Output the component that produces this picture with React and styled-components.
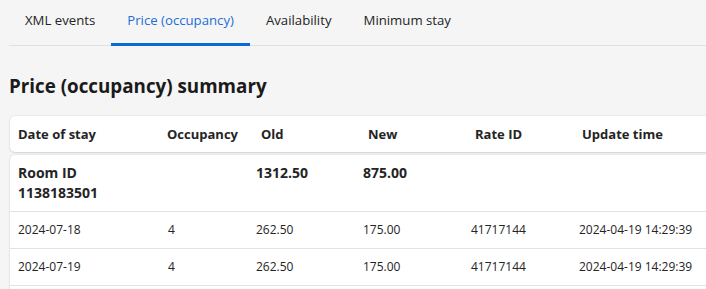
import React from "react";
import styled, { createGlobalStyle } from "styled-components";

const Global = createGlobalStyle`
  html, body { margin: 0; padding: 0; background: #f5f5f5; }
  body { font-family: "Open Sans", "Noto Sans", sans-serif; color: #242424; overflow: hidden; }
  * { box-sizing: border-box; }
`;

const Page = styled.div`
  width: 706px;
  height: 289px;
  padding-left: 9px;
  overflow: hidden;
`;

const TabList = styled.div`
  display: flex;
  height: 46px;
  border-bottom: 1px solid #e0e0e0;
`;

const Tab = styled.div`
  display: flex;
  align-items: center;
  height: 46px;
  margin-bottom: -1px;
  padding: 0 16px 4px;
  font-size: 13.2px;
  color: ${(p) => (p.$active ? "#1b6fd6" : "#242424")};
  border-bottom: 3px solid ${(p) => (p.$active ? "#0b68d8" : "transparent")};
  white-space: nowrap;
`;

const Heading = styled.h2`
  margin: 26px 0 16px;
  font-size: 18.8px;
  line-height: 28px;
  font-weight: 700;
  color: #1a1a1a;
`;

const Card = styled.div`
  margin-left: 1px;
  width: 780px;
  background: #fff;
  border-radius: 5px;
  box-shadow: 0 0 2px rgba(0, 0, 0, 0.12), 0 1px 2px rgba(0, 0, 0, 0.1);
`;

const HeaderCard = styled(Card)`
  margin-bottom: 3px;
`;

const BodyCard = styled(Card)`
  padding-bottom: 40px;
`;

const headCols = "149px 94px 107px 107px 107px 1fr";
const bodyCols = "150px 88px 107px 108px 108px 1fr";

const HeadRow = styled.div`
  display: grid;
  grid-template-columns: ${headCols};
  height: 36px;
  align-items: center;
`;

const HeadCell = styled.div`
  padding-left: 8px;
  font-size: 13px;
  font-weight: 700;
  white-space: nowrap;
`;

const Row = styled.div`
  display: grid;
  grid-template-columns: ${bodyCols};
  align-items: ${(p) => (p.$group ? "start" : "center")};
  height: ${(p) => (p.$group ? "57px" : "37px")};
  padding: ${(p) => (p.$group ? "8px 0" : "0")};
  border-bottom: 1px solid #e3e3e3;
`;

const Cell = styled.div`
  padding-left: 8px;
  font-size: ${(p) => (p.$bold ? "14px" : "12px")};
  font-weight: ${(p) => (p.$bold ? 700 : 400)};
  line-height: 20px;
  white-space: nowrap;
`;

const rows = [
  ["2024-07-18", "4", "262.50", "175.00", "41717144", "2024-04-19 14:29:39"],
  ["2024-07-19", "4", "262.50", "175.00", "41717144", "2024-04-19 14:29:39"],
];

export default function App() {
  return (
    <>
      <Global />
      <Page>
        <TabList>
          <Tab>XML events</Tab>
          <Tab $active>Price (occupancy)</Tab>
          <Tab>Availability</Tab>
          <Tab>Minimum stay</Tab>
        </TabList>
        <Heading>Price (occupancy) summary</Heading>
        <HeaderCard>
          <HeadRow>
            <HeadCell>Date of stay</HeadCell>
            <HeadCell>Occupancy</HeadCell>
            <HeadCell>Old</HeadCell>
            <HeadCell>New</HeadCell>
            <HeadCell>Rate ID</HeadCell>
            <HeadCell>Update time</HeadCell>
          </HeadRow>
        </HeaderCard>
        <BodyCard>
          <Row $group>
            <Cell $bold>
              Room ID
              <br />
              1138183501
            </Cell>
            <Cell />
            <Cell $bold>1312.50</Cell>
            <Cell $bold>875.00</Cell>
            <Cell />
            <Cell />
          </Row>
          {rows.map((r, i) => (
            <Row key={i}>
              {r.map((v, j) => (
                <Cell key={j}>{v}</Cell>
              ))}
            </Row>
          ))}
        </BodyCard>
      </Page>
    </>
  );
}
